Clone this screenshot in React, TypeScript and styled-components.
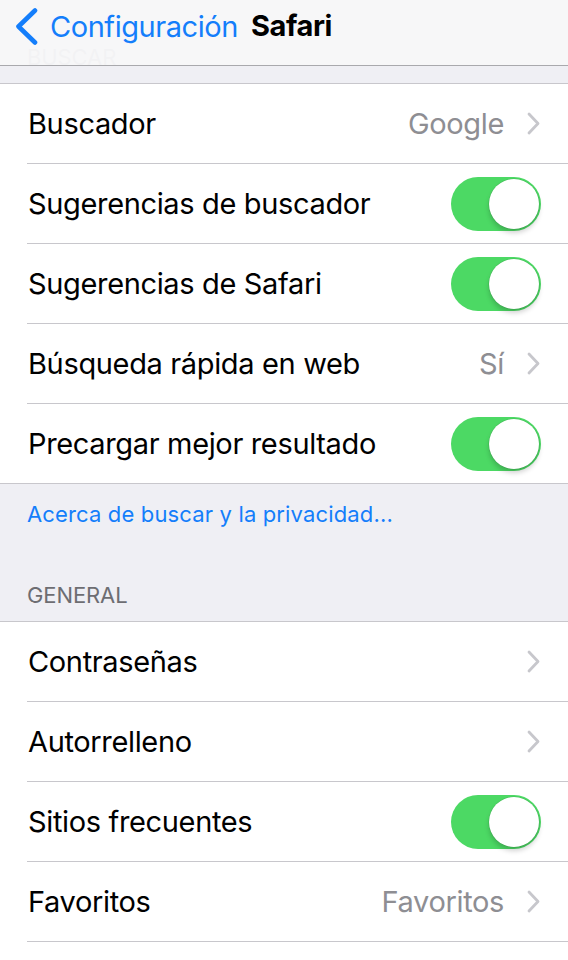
import React from "react";
import styled, { createGlobalStyle } from "styled-components";

const Global = createGlobalStyle`
  html, body { margin: 0; padding: 0; background: #efeff4; }
  body { font-family: Inter, "Liberation Sans", sans-serif; -webkit-font-smoothing: antialiased; }
`;

const Page = styled.div`
  position: relative;
  width: 568px;
  height: 960px;
  overflow: hidden;
  background: #efeff4;
`;

const NavBar = styled.div`
  position: absolute;
  top: 0;
  left: 0;
  right: 0;
  height: 66px;
  background: rgba(247, 247, 248, 0.97);
  border-bottom: 1px solid #a9a9ad;
  display: flex;
  align-items: flex-start;
  padding: 8px 0 0 15px;
  box-sizing: border-box;
  z-index: 2;
`;

const BackButton = styled.div`
  display: flex;
  align-items: center;
  gap: 11px;
  color: #147efb;
  font-size: 29px;
  line-height: 36px;
  letter-spacing: -0.45px;
`;

const Title = styled.div`
  margin-left: 13px;
  font-size: 29px;
  line-height: 36px;
  font-weight: 700;
  letter-spacing: -0.4px;
  color: #000;
`;

const SectionHeader = styled.div<{ $top: number }>`
  padding: ${(p) => p.$top}px 27px 12px;
  font-size: 22px;
  line-height: 28px;
  letter-spacing: -0.1px;
  color: #6d6d72;
  text-transform: uppercase;
`;

const Footer = styled.div`
  padding: 16px 27px 0;
  font-size: 22px;
  line-height: 28px;
  letter-spacing: 0.15px;
  color: #147efb;
`;

const Group = styled.div`
  background: #fff;
  border-top: 1px solid #c8c7cc;
  border-bottom: 1px solid #c8c7cc;
`;

const Row = styled.div<{ $last?: boolean }>`
  position: relative;
  height: 79px;
  display: flex;
  align-items: center;
  padding: 0 27px 0 28px;
  border-bottom: ${(p) => (p.$last ? "none" : "1px solid transparent")};
  &::after {
    content: "";
    display: ${(p) => (p.$last ? "none" : "block")};
    position: absolute;
    left: 27px;
    right: 0;
    bottom: -1px;
    height: 1px;
    background: #c8c7cc;
  }
`;

const Label = styled.div`
  flex: 1;
  font-size: 29px;
  letter-spacing: -0.35px;
  color: #000;
  white-space: nowrap;
`;

const Value = styled.div`
  font-size: 29px;
  letter-spacing: -0.35px;
  color: #8e8e93;
  margin-right: 23px;
  white-space: nowrap;
`;

const Chevron = () => (
  <svg width="13" height="23" viewBox="0 0 13 23" style={{ marginRight: 1 }}>
    <path d="M2 2 L11 11.5 L2 21" fill="none" stroke="#c7c7cc" strokeWidth="2.8" strokeLinecap="round" strokeLinejoin="round" />
  </svg>
);

const BackChevron = () => (
  <svg width="24" height="37" viewBox="0 0 24 37">
    <path d="M20 2.5 L3.5 18.5 L20 34.5" fill="none" stroke="#147efb" strokeWidth="4.6" strokeLinecap="round" strokeLinejoin="round" />
  </svg>
);

const Switch = styled.div`
  position: relative;
  width: 90px;
  height: 54px;
  border-radius: 27px;
  background: #4cd964;
  flex: none;
`;

const Knob = styled.div`
  position: absolute;
  top: 2px;
  right: 2px;
  width: 50px;
  height: 50px;
  border-radius: 50%;
  background: #fff;
  box-shadow: 0 0 0 0.5px rgba(0, 0, 0, 0.12), 0 4px 5px rgba(0, 0, 0, 0.18);
`;

type Item =
  | { label: string; kind: "value"; value?: string }
  | { label: string; kind: "toggle" };

const search: Item[] = [
  { label: "Buscador", kind: "value", value: "Google" },
  { label: "Sugerencias de buscador", kind: "toggle" },
  { label: "Sugerencias de Safari", kind: "toggle" },
  { label: "Búsqueda rápida en web", kind: "value", value: "Sí" },
  { label: "Precargar mejor resultado", kind: "toggle" },
];

const general: Item[] = [
  { label: "Contraseñas", kind: "value" },
  { label: "Autorrelleno", kind: "value" },
  { label: "Sitios frecuentes", kind: "toggle" },
  { label: "Favoritos", kind: "value", value: "Favoritos" },
  { label: "Abrir enlaces", kind: "value", value: "En una pestaña nueva" },
];

const Rows = ({ items }: { items: Item[] }) => (
  <Group>
    {items.map((it, i) => (
      <Row key={it.label} $last={i === items.length - 1}>
        <Label>{it.label}</Label>
        {it.kind === "toggle" ? (
          <Switch>
            <Knob />
          </Switch>
        ) : (
          <>
            {it.value && <Value>{it.value}</Value>}
            <Chevron />
          </>
        )}
      </Row>
    ))}
  </Group>
);

export default function App() {
  return (
    <Page>
      <Global />
      <NavBar>
        <BackButton>
          <BackChevron />
          <span>Configuración</span>
        </BackButton>
        <Title>Safari</Title>
      </NavBar>
      <SectionHeader $top={43}>Buscar</SectionHeader>
      <Rows items={search} />
      <Footer>Acerca de buscar y la privacidad...</Footer>
      <SectionHeader $top={53}>General</SectionHeader>
      <Rows items={general} />
    </Page>
  );
}
